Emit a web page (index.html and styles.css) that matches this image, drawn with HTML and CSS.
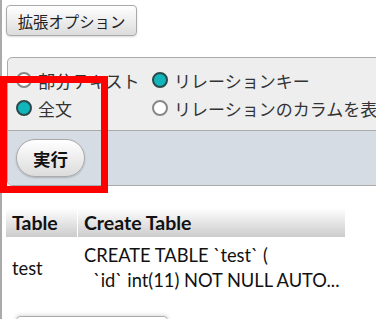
FILE: index.html
```html
<!DOCTYPE html>
<html lang="ja">
<head>
<meta charset="utf-8">
<link rel="stylesheet" href="styles.css">
</head>
<body>
<div class="page">
  <button class="btn ext">拡張オプション</button>
  <div class="opts">
    <div class="opt-grid">
      <label class="opt"><span class="radio"></span>部分テキスト</label>
      <label class="opt"><span class="radio on"></span>リレーションキー</label>
      <label class="opt"><span class="radio on"></span>全文</label>
      <label class="opt"><span class="radio"></span>リレーションのカラムを表示</label>
    </div>
    <div class="opts-foot">
      <button class="btn go">実行</button>
    </div>
  </div>
  <table class="data">
    <thead>
      <tr><th class="c1">Table</th><th class="c2">Create Table</th></tr>
    </thead>
    <tbody>
      <tr><td class="c1">test</td><td class="c2">CREATE TABLE `test` (<br>&nbsp; `id` int(11) NOT NULL AUTO...</td></tr>
    </tbody>
  </table>
  <div class="next-box"></div>
  <div class="highlight"></div>
</div>
</body>
</html>
```
FILE: styles.css
```css
html, body {
  margin: 0;
  padding: 0;
  background: #fff;
  overflow: hidden;
}
.page {
  position: relative;
  border-left: 2px solid #aaa;
  height: 319px;
  padding-left: 4px;
  padding-top: 5px;
  box-sizing: border-box;
  font-family: "Lato", "Noto Sans CJK JP", sans-serif;
  color: #222;
}
.btn {
  display: block;
  font-family: "Noto Sans CJK JP", sans-serif;
  color: #222;
  border: 1px solid #aaa;
  background: linear-gradient(#fff, #dcdcdc);
  cursor: pointer;
}
.ext {
  width: 131px;
  height: 31px;
  padding: 0;
  font-size: 15.4px;
  border-radius: 4px;
  box-shadow: 0 1px 2px rgba(0,0,0,0.15);
}
.opts {
  margin-top: 21px;
  margin-left: 1px;
  width: 420px;
  border: 1px solid #aaa;
  border-radius: 5px 0 0 5px;
  background: #eee;
  overflow: hidden;
}
.opt-grid {
  display: grid;
  grid-template-columns: 136px auto;
  grid-auto-rows: 28px;
  padding: 8px 0 8px 8px;
  white-space: nowrap;
}
.opt {
  display: flex;
  align-items: center;
  gap: 6px;
  font-family: "Noto Sans CJK JP", sans-serif;
  font-size: 17px;
  color: #333;
}
.radio {
  width: 12px;
  height: 12px;
  border-radius: 50%;
  border: 2px solid #888;
  background: #fff;
  flex: none;
}
.radio.on {
  border-color: #2a4a4c;
  background: #10b6bc;
}
.opts-foot {
  border-top: 1px solid #aaa;
  background: #d5dce3;
  padding: 8px 0 8px 8px;
}
.go {
  width: 69px;
  height: 38px;
  padding: 0;
  border-radius: 19px;
  font-size: 17.5px;
  font-weight: bold;
  color: #111;
  box-shadow: 0 1px 2px rgba(0,0,0,0.2);
}
.data {
  margin-top: 22px;
  border-collapse: separate;
  border-spacing: 0;
  font-size: 18.3px;
  color: #111;
}
.data th {
  height: 29px;
  padding: 0 6px;
  text-align: left;
  font-weight: bold;
  font-size: 19.5px;
  background: linear-gradient(#fff, #ccc);
}
.data th.c1 {
  width: 59px;
  border-right: 1px solid #fff;
}
.data th.c2 {
  width: 255px;
}
.data td {
  padding: 6px 6px;
  line-height: 25px;
  vertical-align: middle;
  white-space: nowrap;
}
.next-box {
  margin-top: 17px;
  margin-left: 10px;
  width: 150px;
  height: 20px;
  border: 1px solid #aaa;
  border-radius: 4px;
  box-shadow: 0 -1px 4px rgba(0,0,0,0.15);
}
.highlight {
  position: absolute;
  left: -2px;
  top: 76px;
  width: 94px;
  height: 103px;
  border: 7px solid #f00;
}
```
